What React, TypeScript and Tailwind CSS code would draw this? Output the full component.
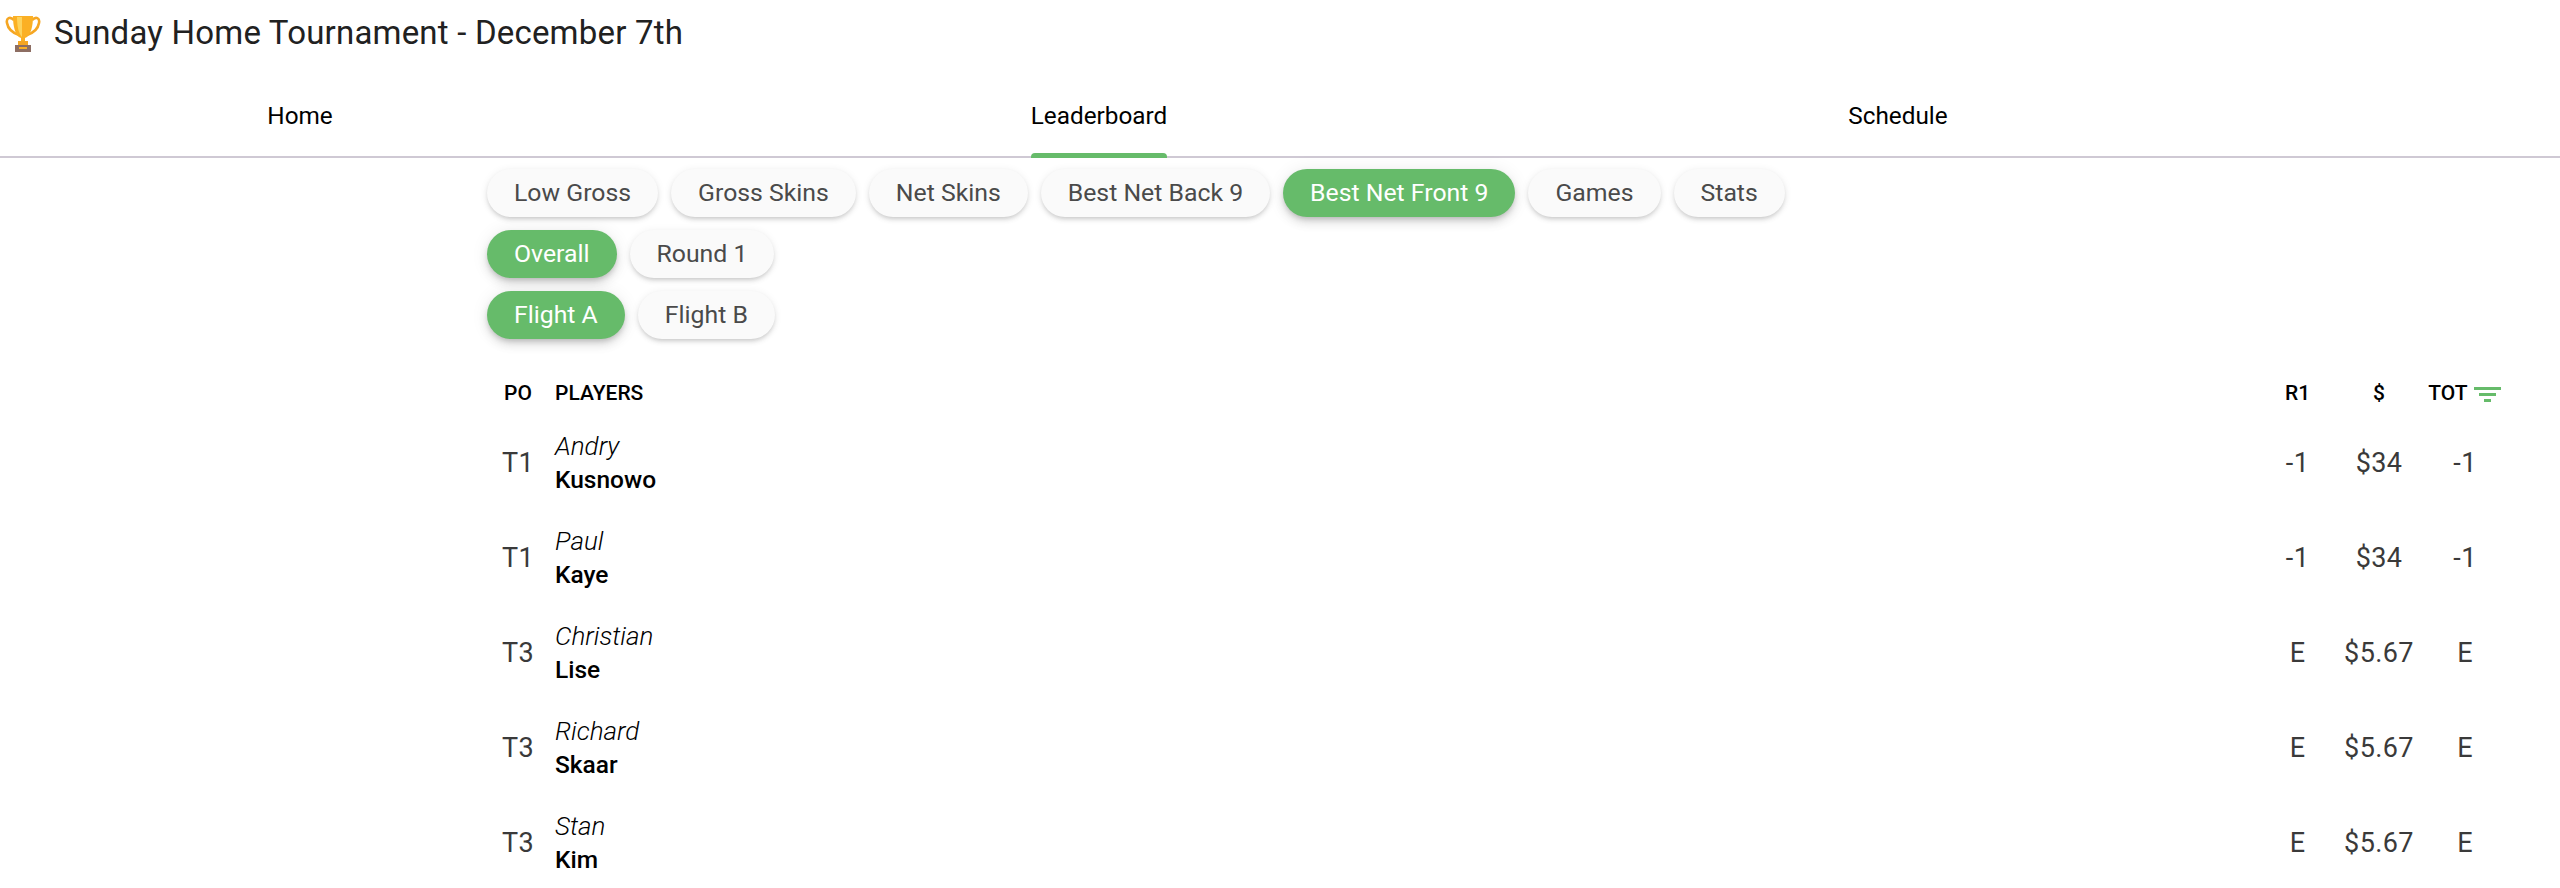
const FONT = "font-['Roboto',sans-serif]";

const rows = [
  { pos: "T1", first: "Andry", last: "Kusnowo", r1: "-1", money: "$34", tot: "-1" },
  { pos: "T1", first: "Paul", last: "Kaye", r1: "-1", money: "$34", tot: "-1" },
  { pos: "T3", first: "Christian", last: "Lise", r1: "E", money: "$5.67", tot: "E" },
  { pos: "T3", first: "Richard", last: "Skaar", r1: "E", money: "$5.67", tot: "E" },
  { pos: "T3", first: "Stan", last: "Kim", r1: "E", money: "$5.67", tot: "E" },
];

const Trophy = () => (
  <svg width="36" height="38" viewBox="0 0 36 38" className="shrink-0">
    <path d="M9 6C5 2 1 4 2 9c1 6 6 10 12 12" fill="none" stroke="#f5a623" strokeWidth="2.6" />
    <path d="M27 6c4-4 8-2 7 3-1 6-6 10-12 12" fill="none" stroke="#f5a623" strokeWidth="2.6" />
    <path d="M8 2h20c0 10-2 20-8 22v4h-4v-4C10 22 8 12 8 2z" fill="#fbb024" />
    <path d="M12 3h5v20c-3-3-5-10-5-20z" fill="#fdd35c" />
    <rect x="13" y="27" width="10" height="4" fill="#f5a623" />
    <rect x="10" y="31" width="16" height="7" fill="#8d6e63" />
    <rect x="14" y="33" width="8" height="2" fill="#fbb024" />
  </svg>
);

const FilterIcon = () => (
  <svg width="28" height="16" viewBox="0 0 28 16" className="shrink-0">
    <rect x="0" y="1" width="27" height="3" fill="#66bb6a" />
    <rect x="5" y="7" width="17" height="3" fill="#66bb6a" />
    <rect x="10" y="13" width="7" height="3" fill="#66bb6a" />
  </svg>
);

const Pill = ({ label, active }: { label: string; active?: boolean }) => (
  <button
    className={
      active
        ? "h-[48px] rounded-[24px] px-[27px] text-[24.8px] bg-[#66bb6a] text-white shadow-[0_3px_5px_-1px_rgba(0,0,0,0.16),0_6px_10px_0_rgba(0,0,0,0.1),0_1px_18px_0_rgba(0,0,0,0.08)]"
        : "h-[48px] rounded-[24px] px-[27px] text-[24.8px] bg-[#fafafa] text-[#4a4a4a] shadow-[0_3px_4px_-2px_rgba(0,0,0,0.12),0_3px_5px_0_rgba(0,0,0,0.08),0_1px_8px_0_rgba(0,0,0,0.07)]"
    }
  >
    {label}
  </button>
);

export default function App() {
  return (
    <div className={`${FONT} h-[888px] overflow-hidden bg-white`}>
      <div className="flex h-[68px] items-start gap-[13px] pl-[5px] pt-[14px]">
        <Trophy />
        <span className="text-[33px] leading-[38px] tracking-[0.2px] text-[#212121]">
          Sunday Home Tournament - December 7th
        </span>
      </div>

      <div className="grid h-[90px] grid-cols-[600px_998px_600px] border-b-2 border-[#cfc9d4] text-[24.3px] text-black">
        <div className="flex items-center justify-center pt-[8px]">Home</div>
        <div className="flex items-center justify-center pt-[8px]">
          <div className="relative">
            Leaderboard
            <div className="absolute bottom-[-24px] left-0 right-0 h-[5px] rounded-t-[4px] bg-[#66bb6a]" />
          </div>
        </div>
        <div className="flex items-center justify-center pt-[8px]">Schedule</div>
      </div>

      <div className="ml-[487px] mr-[50px] pt-[11px]">
        <div className="flex flex-col gap-[13px]">
          <div className="flex gap-[13px]">
            <Pill label="Low Gross" />
            <Pill label="Gross Skins" />
            <Pill label="Net Skins" />
            <Pill label="Best Net Back 9" />
            <Pill label="Best Net Front 9" active />
            <Pill label="Games" />
            <Pill label="Stats" />
          </div>
          <div className="flex gap-[13px]">
            <Pill label="Overall" active />
            <Pill label="Round 1" />
          </div>
          <div className="flex gap-[13px]">
            <Pill label="Flight A" active />
            <Pill label="Flight B" />
          </div>
        </div>

        <div className="mt-[34px] flex h-[42px] items-center text-[21px] font-medium text-black">
          <div className="w-[62px] text-center">PO</div>
          <div className="ml-[6px] flex-1">PLAYERS</div>
          <div className="w-[81px] text-center">R1</div>
          <div className="w-[82px] text-center">$</div>
          <div className="flex w-[90px] items-center justify-center gap-[6px]">
            TOT
            <FilterIcon />
          </div>
        </div>

        {rows.map((r, i) => (
          <div key={i} className="flex h-[95px] items-center text-[27px] tracking-[0.4px] text-[#3a3a3a]">
            <div className="w-[62px] pt-[2px] text-center">{r.pos}</div>
            <div className="ml-[6px] flex-1 text-[24.5px] leading-[34px] tracking-normal text-black">
              <div className="text-[26px] font-light italic">{r.first}</div>
              <div className="font-medium">{r.last}</div>
            </div>
            <div className="w-[81px] pt-[2px] text-center">{r.r1}</div>
            <div className="w-[82px] pt-[2px] text-center">{r.money}</div>
            <div className="w-[90px] pt-[2px] text-center">{r.tot}</div>
          </div>
        ))}
      </div>
    </div>
  );
}
